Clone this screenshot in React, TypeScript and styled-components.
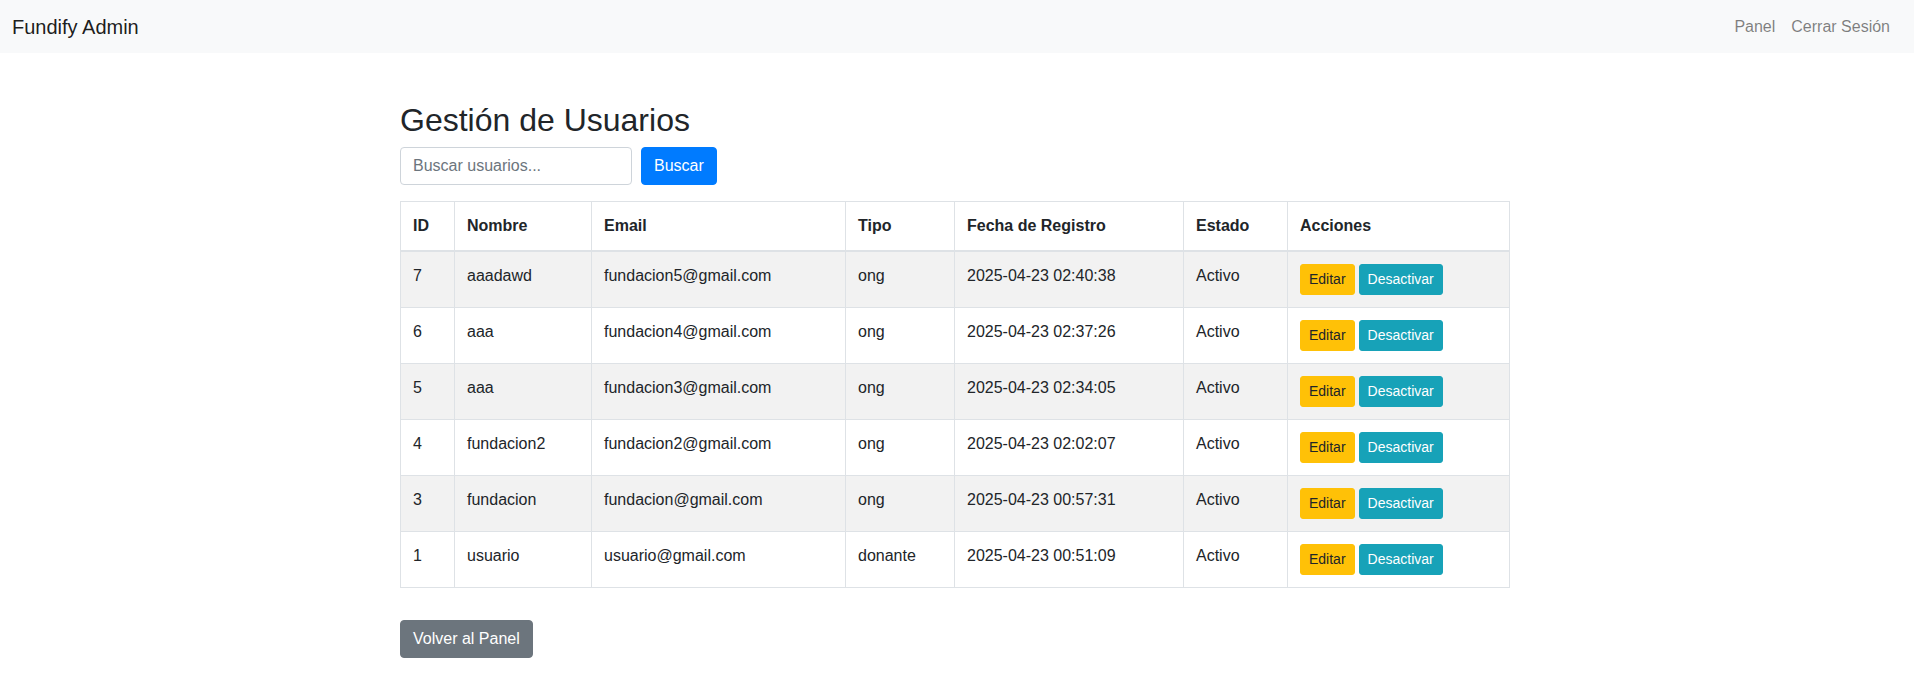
import React from "react";
import styled, { createGlobalStyle } from "styled-components";

const GlobalStyle = createGlobalStyle`
  * { box-sizing: border-box; }
  html, body { margin: 0; padding: 0; background: #fff; }
  body {
    font-family: "Liberation Sans", Arial, sans-serif;
    font-size: 16px;
    line-height: 1.5;
    color: #212529;
  }
`;

const NavBar = styled.nav`
  height: 53px;
  background: #f8f9fa;
  display: flex;
  align-items: center;
  justify-content: space-between;
  padding: 0 16px 0 12px;
`;

const Brand = styled.a`
  font-size: 20px;
  line-height: 30px;
  color: rgba(0, 0, 0, 0.9);
  text-decoration: none;
`;

const NavLinks = styled.div`
  display: flex;
  align-items: center;
`;

const NavLink = styled.a`
  padding: 8px;
  font-size: 16px;
  line-height: 24px;
  color: rgba(0, 0, 0, 0.5);
  text-decoration: none;
`;

const Main = styled.main`
  padding: 48px 4px 0 0;
`;

const Container = styled.div`
  width: 1110px;
  margin: 0 auto;
`;

const Title = styled.h2`
  margin: 0 0 8px;
  font-size: 32px;
  font-weight: 500;
  line-height: 1.2;
  color: #212529;
`;

const SearchForm = styled.form`
  display: flex;
  align-items: center;
  gap: 9px;
  margin-bottom: 16px;
`;

const SearchInput = styled.input`
  width: 232px;
  height: 38px;
  padding: 6px 12px;
  font-family: inherit;
  font-size: 16px;
  line-height: 1.5;
  color: #495057;
  background: #fff;
  border: 1px solid #ced4da;
  border-radius: 4px;
  outline: none;
  &::placeholder { color: #6c757d; opacity: 1; }
`;

const Button = styled.button<{ $bg: string; $fg: string; $small?: boolean }>`
  display: inline-block;
  font-family: inherit;
  font-weight: 400;
  font-size: ${(p) => (p.$small ? "14px" : "16px")};
  line-height: 1.5;
  padding: ${(p) => (p.$small ? "4px 8px" : "6px 12px")};
  border: 1px solid ${(p) => p.$bg};
  border-radius: ${(p) => (p.$small ? "3px" : "4px")};
  background: ${(p) => p.$bg};
  color: ${(p) => p.$fg};
  cursor: pointer;
`;

const Table = styled.table`
  width: 1110px;
  table-layout: fixed;
  border-collapse: collapse;
  margin-bottom: 16px;
  color: #212529;
`;

const Col = styled.col<{ $w: number }>`
  width: ${(p) => p.$w}px;
`;

const Th = styled.th`
  padding: 12px;
  text-align: left;
  vertical-align: bottom;
  font-weight: 700;
  border: 1px solid #dee2e6;
  border-bottom-width: 2px;
`;

const Tr = styled.tr`
  &:nth-of-type(odd) { background: rgba(0, 0, 0, 0.05); }
`;

const Td = styled.td`
  padding: 12px;
  vertical-align: top;
  border: 1px solid #dee2e6;
  white-space: nowrap;
`;

const Actions = styled.div`
  display: flex;
  gap: 4px;
`;

const BackButton = styled(Button)`
  margin-top: 16px;
`;

const users = [
  { id: 7, name: "aaadawd", email: "fundacion5@gmail.com", type: "ong", date: "2025-04-23 02:40:38" },
  { id: 6, name: "aaa", email: "fundacion4@gmail.com", type: "ong", date: "2025-04-23 02:37:26" },
  { id: 5, name: "aaa", email: "fundacion3@gmail.com", type: "ong", date: "2025-04-23 02:34:05" },
  { id: 4, name: "fundacion2", email: "fundacion2@gmail.com", type: "ong", date: "2025-04-23 02:02:07" },
  { id: 3, name: "fundacion", email: "fundacion@gmail.com", type: "ong", date: "2025-04-23 00:57:31" },
  { id: 1, name: "usuario", email: "usuario@gmail.com", type: "donante", date: "2025-04-23 00:51:09" },
];

const widths = [54, 137, 254, 109, 229, 104, 222];
const headers = ["ID", "Nombre", "Email", "Tipo", "Fecha de Registro", "Estado", "Acciones"];

export default function App() {
  return (
    <>
      <GlobalStyle />
      <NavBar>
        <Brand href="#">Fundify Admin</Brand>
        <NavLinks>
          <NavLink href="#">Panel</NavLink>
          <NavLink href="#">Cerrar Sesión</NavLink>
        </NavLinks>
      </NavBar>
      <Main>
        <Container>
          <Title>Gestión de Usuarios</Title>
          <SearchForm onSubmit={(e) => e.preventDefault()}>
            <SearchInput placeholder="Buscar usuarios..." />
            <Button type="submit" $bg="#007bff" $fg="#fff">Buscar</Button>
          </SearchForm>
          <Table>
            <colgroup>
              {widths.map((w, i) => (
                <Col key={i} $w={w} />
              ))}
            </colgroup>
            <thead>
              <tr>
                {headers.map((h) => (
                  <Th key={h}>{h}</Th>
                ))}
              </tr>
            </thead>
            <tbody>
              {users.map((u) => (
                <Tr key={u.id}>
                  <Td>{u.id}</Td>
                  <Td>{u.name}</Td>
                  <Td>{u.email}</Td>
                  <Td>{u.type}</Td>
                  <Td>{u.date}</Td>
                  <Td>Activo</Td>
                  <Td>
                    <Actions>
                      <Button $small $bg="#ffc107" $fg="#212529">Editar</Button>
                      <Button $small $bg="#17a2b8" $fg="#fff">Desactivar</Button>
                    </Actions>
                  </Td>
                </Tr>
              ))}
            </tbody>
          </Table>
          <BackButton $bg="#6c757d" $fg="#fff">Volver al Panel</BackButton>
        </Container>
      </Main>
    </>
  );
}
